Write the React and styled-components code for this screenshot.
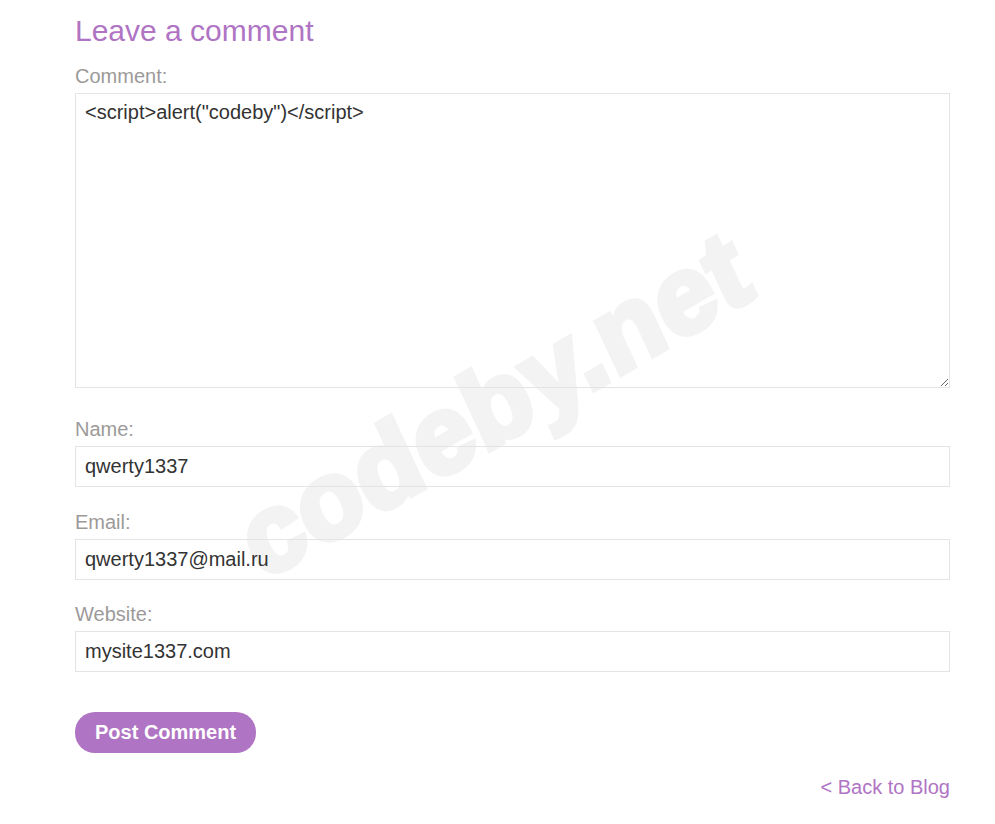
import React from 'react'
import styled, { createGlobalStyle } from 'styled-components'

const GlobalStyle = createGlobalStyle`
  html, body {
    margin: 0;
    padding: 0;
    background: #fff;
    font-family: 'Liberation Sans', Arial, sans-serif;
  }
`

const Page = styled.div`
  position: relative;
  width: 875px;
  padding: 14px 45px 30px 75px;
  overflow: hidden;
`

const Content = styled.div`
  position: relative;
  z-index: 1;
`

const Heading = styled.h2`
  margin: 0 0 17px;
  font-size: 30px;
  line-height: 34px;
  font-weight: normal;
  color: #b074c4;
`

const Form = styled.form`
  display: flex;
  flex-direction: column;
`

const Label = styled.label`
  display: block;
  margin-bottom: 5px;
  font-size: 20px;
  line-height: 23px;
  color: #9c9a99;
`

const fieldBase = `
  display: block;
  box-sizing: border-box;
  width: 100%;
  border: 1px solid #e4e4e4;
  background: transparent;
  color: #333;
  font-family: 'Liberation Sans', Arial, sans-serif;
  font-size: 20px;
  outline: none;
  border-radius: 0;
`

const TextArea = styled.textarea`
  ${fieldBase}
  height: 295px;
  margin: 0 0 30px;
  padding: 7px 9px;
  line-height: 23px;
  resize: both;
`

const Input = styled.input`
  ${fieldBase}
  height: 41px;
  margin: 0 0 23.5px;
  padding: 0 9px;
`

const Button = styled.button`
  align-self: flex-start;
  height: 41px;
  margin-top: 16.5px;
  padding: 0 20px;
  border: none;
  border-radius: 20px;
  background: #b074c4;
  color: #fff;
  font-family: 'Liberation Sans', Arial, sans-serif;
  font-size: 20px;
  font-weight: bold;
  line-height: 41px;
  cursor: pointer;
`

const BackLink = styled.a`
  display: block;
  margin-top: 23px;
  text-align: right;
  font-size: 20px;
  line-height: 23px;
  color: #b074c4;
  text-decoration: none;
`

const Watermark = styled.div`
  position: absolute;
  z-index: 0;
  left: 494px;
  top: 404px;
  transform: translate(-50%, -50%) rotate(-30deg) skewX(-5deg);
  font-family: 'Liberation Sans', Arial, sans-serif;
  font-size: 108px;
  font-weight: bold;
  letter-spacing: 1px;
  color: #f3f3f3;
  -webkit-text-stroke: 6px #f3f3f3;
  white-space: nowrap;
  pointer-events: none;
  user-select: none;
`

const fields = [
  { id: 'name', label: 'Name:', value: 'qwerty1337' },
  { id: 'email', label: 'Email:', value: 'qwerty1337@mail.ru' },
  { id: 'website', label: 'Website:', value: 'mysite1337.com' },
]

export default function App() {
  return (
    <>
      <GlobalStyle />
      <Page>
        <Watermark>codeby.net</Watermark>
        <Content>
          <Heading>Leave a comment</Heading>
          <Form onSubmit={e => e.preventDefault()}>
            <Label htmlFor="comment">Comment:</Label>
            <TextArea id="comment" defaultValue={'<script>alert("codeby")</script>'} />
            {fields.map(f => (
              <React.Fragment key={f.id}>
                <Label htmlFor={f.id}>{f.label}</Label>
                <Input id={f.id} defaultValue={f.value} />
              </React.Fragment>
            ))}
            <Button type="submit">Post Comment</Button>
          </Form>
          <BackLink href="#">&lt; Back to Blog</BackLink>
        </Content>
      </Page>
    </>
  )
}
